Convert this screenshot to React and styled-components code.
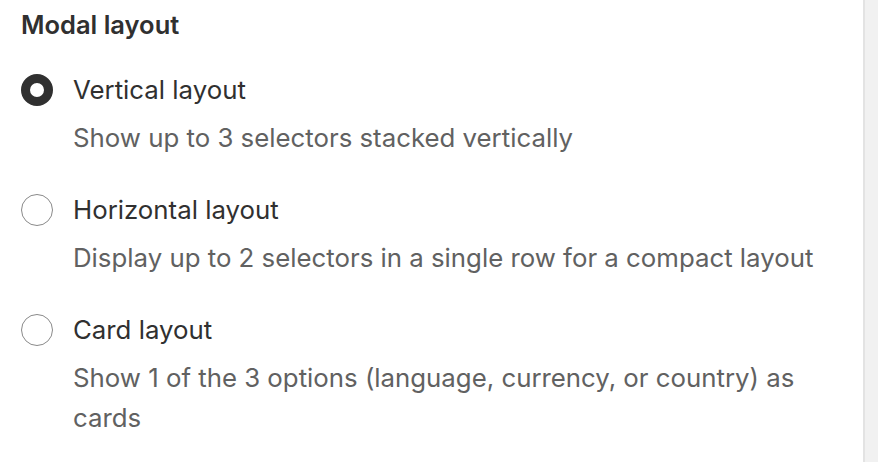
import styled, { createGlobalStyle } from "styled-components";

const Global = createGlobalStyle`
  html, body {
    margin: 0;
    padding: 0;
    background: #f1f1f1;
  }
  body {
    font-family: Inter, "Noto Sans", sans-serif;
    -webkit-font-smoothing: antialiased;
  }
`;

const Page = styled.div`
  display: flex;
  height: 462px;
  overflow: hidden;
`;

const Panel = styled.section`
  width: 865px;
  background: #ffffff;
  border-right: 2px solid #e3e3e3;
  padding: 5px 0 0 21px;
  box-sizing: border-box;
`;

const Heading = styled.h2`
  margin: 0;
  font-size: 25.5px;
  line-height: 40px;
  font-weight: 600;
  color: #303030;
`;

const List = styled.div`
  display: flex;
  flex-direction: column;
  gap: 32px;
  margin-top: 24.5px;
`;

const Option = styled.label`
  display: grid;
  grid-template-columns: 34px 1fr;
  column-gap: 18px;
  row-gap: 8px;
  align-items: center;
`;

const Radio = styled.span`
  width: 32px;
  height: 32px;
  box-sizing: border-box;
  border-radius: 50%;
  background: #fff;
  border: ${({ checked }) => (checked ? "9px solid #303030" : "1.5px solid #8a8a8a")};
`;

const Title = styled.span`
  font-size: 25.8px;
  line-height: 40px;
  color: #303030;
`;

const Desc = styled.p`
  grid-column: 2;
  margin: 0;
  font-size: 25.8px;
  line-height: 40px;
  color: #616161;
  max-width: 760px;
`;

const options = [
  {
    title: "Vertical layout",
    desc: "Show up to 3 selectors stacked vertically",
    checked: true,
  },
  {
    title: "Horizontal layout",
    desc: "Display up to 2 selectors in a single row for a compact layout",
  },
  {
    title: "Card layout",
    desc: "Show 1 of the 3 options (language, currency, or country) as cards",
  },
];

export default function App() {
  return (
    <Page>
      <Global />
      <Panel>
        <Heading>Modal layout</Heading>
        <List>
          {options.map((o) => (
            <Option key={o.title}>
              <Radio checked={o.checked} />
              <Title>{o.title}</Title>
              <Desc>{o.desc}</Desc>
            </Option>
          ))}
        </List>
      </Panel>
    </Page>
  );
}
